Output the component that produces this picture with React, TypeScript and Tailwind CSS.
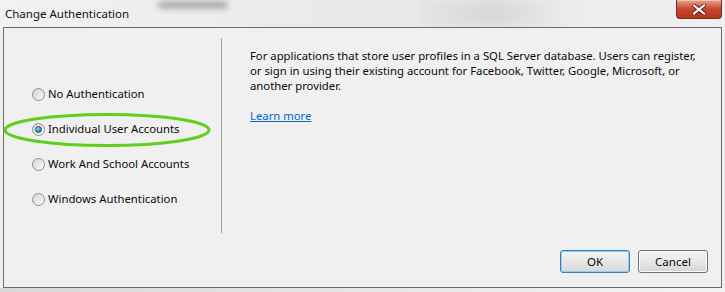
import { useState } from "react";

const options = [
  "No Authentication",
  "Individual User Accounts",
  "Work And School Accounts",
  "Windows Authentication",
];

const Radio = ({ checked }: { checked: boolean }) => (
  <span className="relative flex h-[13px] w-[13px] shrink-0 items-center justify-center rounded-full border border-[#8e8f8f] bg-gradient-to-br from-[#d4d4d4] to-[#fbfbfb]">
    {checked && (
      <span className="h-[7px] w-[7px] rounded-full border border-[#1c5180] bg-[radial-gradient(circle_at_35%_35%,#8fd5f2,#2a7fb8_70%)]" />
    )}
  </span>
);

const App = () => {
  const [selected, setSelected] = useState(1);

  return (
    <div className="relative flex h-[292px] w-[725px] flex-col overflow-hidden bg-[#f0f0f0] font-['Noto_Sans',sans-serif] text-[11.3px] text-[#0a0a0a]">
      {/* title bar */}
      <div className="relative flex h-[27px] items-center bg-gradient-to-r from-[#f2f2f2] via-[#e9e9e9] to-[#efefef] pl-[5px]">
        <span className="absolute left-[158px] top-[2px] h-[6px] w-[70px] rounded-full bg-[#9a9a9a] blur-[3px]" />
        <span className="absolute left-[420px] top-0 h-[27px] w-[150px] bg-gradient-to-r from-[#e4e4e4] via-[#d8d8d8] to-[#ececec] blur-[4px]" />
        <span className="relative text-[11.5px] text-[#111]">Change Authentication</span>
        <div className="absolute right-[3px] top-0 flex h-[19px] w-[46px] items-center justify-center rounded-b-[4px] border border-t-0 border-[#7a2a1e] bg-gradient-to-b from-[#e8a08e] via-[#c8452c] to-[#b8321c] shadow-[inset_0_1px_0_rgba(255,255,255,0.4)]">
          <svg width="14" height="11" viewBox="0 0 14 11">
            <path d="M2 1.5 L12 9.5 M12 1.5 L2 9.5" stroke="#5a1a10" strokeWidth="4" strokeLinecap="square" />
            <path d="M2 1.5 L12 9.5 M12 1.5 L2 9.5" stroke="#ffffff" strokeWidth="2.2" strokeLinecap="square" />
          </svg>
        </div>
      </div>

      {/* panel */}
      <div className="relative mx-[3px] flex h-[261px] border border-[#6a6a6a] bg-[#f0f0f0]">
        <div className="flex w-[217px] flex-col gap-[15px] pl-[28px] pt-[56px]">
          {options.map((label, i) => (
            <label
              key={label}
              className="flex h-[20px] cursor-default items-center gap-[3px] whitespace-nowrap"
              onClick={() => setSelected(i)}
            >
              <Radio checked={selected === i} />
              <span>{label}</span>
            </label>
          ))}
        </div>

        <div className="mt-[10px] h-[195px] w-px bg-[#a0a0a0]" />

        <div className="flex flex-1 flex-col pb-[14px] pl-[28px] pr-[13px] pt-[20px]">
          <p className="whitespace-nowrap leading-[15px]">
            <span className="block">For applications that store user profiles in a SQL Server database. Users can register,</span>
            <span className="block">or sign in using their existing account for Facebook, Twitter, Google, Microsoft, or</span>
            <span className="block">another provider.</span>
          </p>
          <a href="#" className="mt-[15px] w-fit leading-[15px] text-[#0066cc] underline">
            Learn more
          </a>
          <div className="mt-auto flex justify-end gap-[8px]">
            <button className="h-[23px] w-[70px] rounded-[3px] border border-[#3c7fb1] bg-gradient-to-b from-[#f4f4f4] via-[#e8e8e8] to-[#d6d6d6] text-[11.5px] shadow-[inset_0_0_0_1px_#8fd0ef]">
              OK
            </button>
            <button className="h-[23px] w-[70px] rounded-[3px] border border-[#707070] bg-gradient-to-b from-[#f4f4f4] via-[#e8e8e8] to-[#d6d6d6] text-[11.5px] shadow-[inset_0_0_0_1px_#fcfcfc]">
              Cancel
            </button>
          </div>
        </div>

        {/* highlight annotation */}
        <svg className="pointer-events-none absolute left-[-2px] top-[84px]" width="212" height="36" viewBox="0 0 212 36">
          <ellipse cx="105" cy="18" rx="102" ry="15.5" fill="none" stroke="#5fcf1c" strokeWidth="3" />
        </svg>
      </div>

      <div className="h-[4px] bg-gradient-to-r from-[#d8d8d8] via-[#e6e6e6] to-[#f4f4f4]" />
    </div>
  );
};

export default App;
